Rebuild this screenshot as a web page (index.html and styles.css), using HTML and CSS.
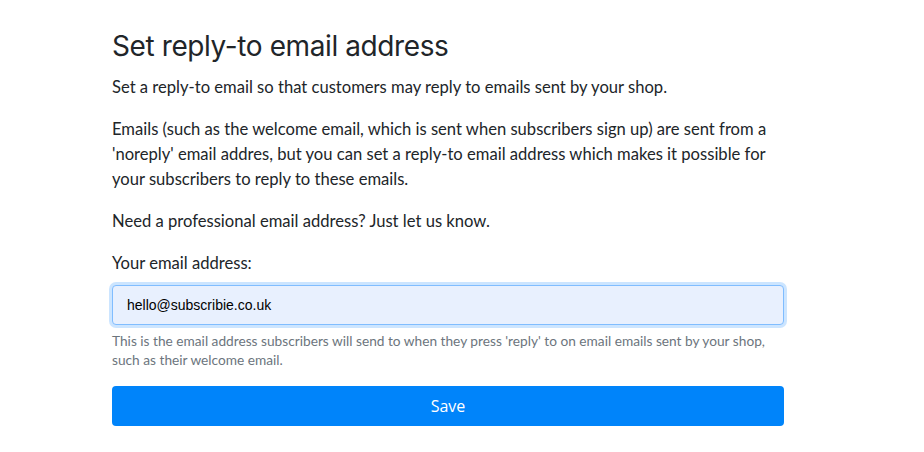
FILE: index.html
```html
<!DOCTYPE html>
<html>
<head>
<meta charset="utf-8">
<link rel="stylesheet" href="styles.css">
</head>
<body>
<main class="page">
  <h1 class="title">Set reply-to email address</h1>
  <p class="text">Set a reply-to email so that customers may reply to emails sent by your shop.</p>
  <p class="text">Emails (such as the welcome email, which is sent when subscribers sign up) are sent from a 'noreply' email addres, but you can set a reply-to email address which makes it possible for your subscribers to reply to these emails.</p>
  <p class="text">Need a professional email address? Just let us know.</p>
  <form class="form">
    <label class="label" for="email">Your email address:</label>
    <input class="input" id="email" type="text" value="hello@subscribie.co.uk">
    <small class="help">This is the email address subscribers will send to when they press 'reply' to on email emails sent by your shop, such as their welcome email.</small>
    <button class="btn" type="button">Save</button>
  </form>
</main>
</body>
</html>
```
FILE: styles.css
```css
html, body { margin: 0; padding: 0; background: #fff; }
body { font-family: Lato, "Liberation Sans", sans-serif; color: #212529; }
.page { width: 672px; margin-left: 112px; padding-top: 29px; }
.title { font-family: Inter, "Liberation Sans", sans-serif; font-weight: 400; font-size: 28px; line-height: 34px; letter-spacing: -0.4px; margin: 0 0 12px 0; color: #212529; }
.text { font-size: 16.6px; line-height: 25px; margin: 0 0 17px 0; }
.form { display: flex; flex-direction: column; }
.label { font-size: 16.6px; line-height: 25px; margin-bottom: 9px; }
.input { box-sizing: border-box; height: 40px; width: 100%; padding: 0 14px; font-family: "Liberation Sans", Arial, sans-serif; font-size: 14px; color: #000; background: #e8f0fe; border: 1px solid #80bdff; border-radius: 4px; box-shadow: 0 0 0 3px rgba(0,123,255,.2); outline: none; }
.help { font-size: 13.7px; line-height: 19px; color: #6c757d; margin-top: 6px; }
.btn { margin-top: 17px; height: 40px; width: 100%; border: 0; border-radius: 4px; background: #0084fa; color: #fff; font-family: "Open Sans", "Noto Sans", sans-serif; font-size: 16px; }
```
